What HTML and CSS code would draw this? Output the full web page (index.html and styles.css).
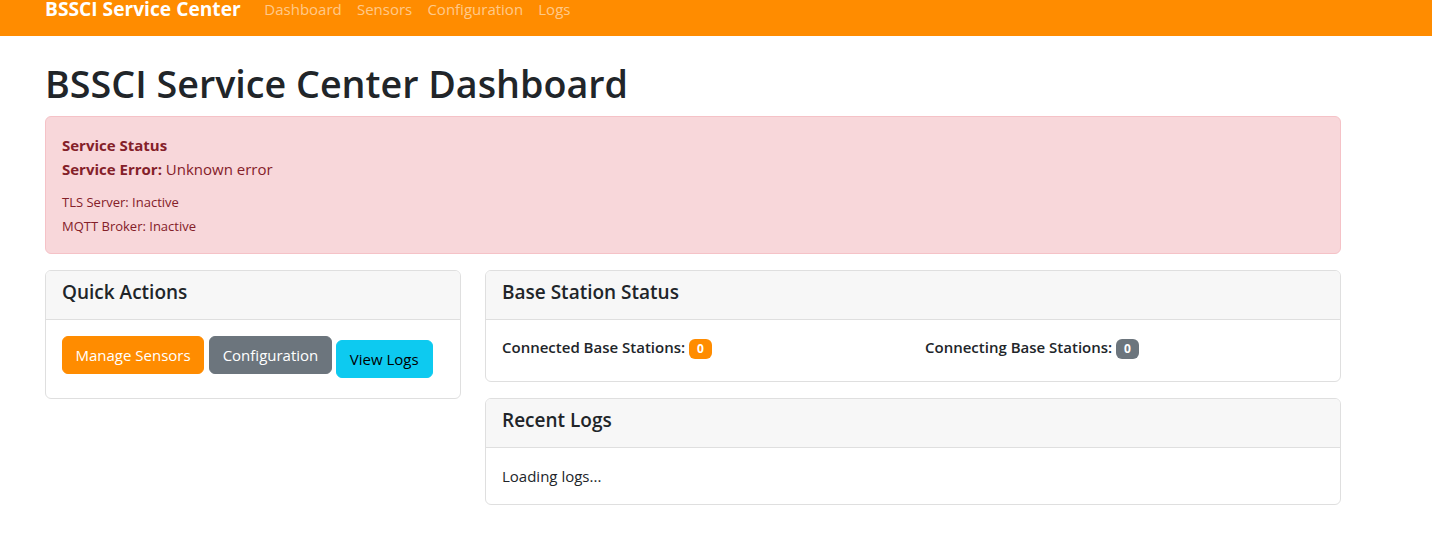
FILE: index.html
```html
<!DOCTYPE html>
<html lang="en">
<head>
<meta charset="utf-8">
<title>BSSCI Service Center Dashboard</title>
<link rel="stylesheet" href="styles.css">
</head>
<body>
<nav class="navbar">
  <div class="container nav-inner">
    <a class="brand" href="#">BSSCI Service Center</a>
    <ul class="nav-links">
      <li><a href="#">Dashboard</a></li>
      <li><a href="#">Sensors</a></li>
      <li><a href="#">Configuration</a></li>
      <li><a href="#">Logs</a></li>
    </ul>
  </div>
</nav>
<main class="container main">
  <h1 class="page-title">BSSCI Service Center Dashboard</h1>
  <div class="alert">
    <div class="alert-title">Service Status</div>
    <div><strong>Service Error:</strong> Unknown error</div>
    <div class="svc-list">
      <div>TLS Server: Inactive</div>
      <div>MQTT Broker: Inactive</div>
    </div>
  </div>
  <div class="row">
    <div class="col-left">
      <div class="card">
        <div class="card-header">Quick Actions</div>
        <div class="card-body">
          <div class="actions">
            <a class="btn btn-orange" href="#">Manage Sensors</a>
            <a class="btn btn-secondary" href="#">Configuration</a>
            <a class="btn btn-info" href="#">View Logs</a>
          </div>
        </div>
      </div>
    </div>
    <div class="col-right">
      <div class="card">
        <div class="card-header">Base Station Status</div>
        <div class="card-body bs-body">
          <div class="bs-row">
            <div class="bs-col"><span class="label">Connected Base Stations:</span> <span class="badge badge-orange">0</span></div>
            <div class="bs-col"><span class="label">Connecting Base Stations:</span> <span class="badge badge-gray">0</span></div>
          </div>
        </div>
      </div>
      <div class="card">
        <div class="card-header">Recent Logs</div>
        <div class="card-body">Loading logs...</div>
      </div>
    </div>
  </div>
</main>
</body>
</html>
```
FILE: styles.css
```css
* { box-sizing: border-box; }
html, body { margin: 0; padding: 0; }
body {
  font-family: "Open Sans", "Noto Sans", sans-serif;
  font-size: 15px;
  line-height: 24px;
  color: #212529;
  background: #fff;
  overflow: hidden;
}
a { text-decoration: none; }

.container {
  width: 1296px;
  margin-left: 45px;
}

.navbar {
  background: #ff8c00;
  margin-top: -17px;
  height: 53px;
  padding: 6px 0 7px;
}
.nav-inner {
  display: flex;
  align-items: center;
  height: 40px;
}
.brand {
  color: #fff;
  font-size: 19.2px;
  font-weight: 700;
  line-height: 30px;
  padding: 5px 0;
  margin-right: 16px;
  white-space: nowrap;
}
.nav-links {
  display: flex;
  list-style: none;
  margin: 0;
  padding: 0;
}
.nav-links a {
  display: block;
  padding: 8px 7.6px;
  color: rgba(255, 255, 255, 0.55);
  line-height: 24px;
  white-space: nowrap;
}

.main { margin-top: 24px; }
.page-title {
  font-size: 37.7px;
  font-weight: 550;
  line-height: 48px;
  margin: 0 0 8px;
  white-space: nowrap;
}

.alert {
  background: #f8d7da;
  border: 1px solid #f5c2c7;
  border-radius: 6px;
  color: #842029;
  padding: 16px 16px 15px;
  margin-bottom: 16px;
}
.alert-title { font-weight: 700; }
.alert strong { font-weight: 700; }
.svc-list {
  margin-top: 9px;
  font-size: 13px;
  line-height: 24px;
}

.row {
  display: flex;
  gap: 24px;
  align-items: flex-start;
}
.col-left { width: 416px; }
.col-right { width: 856px; }

.card {
  border: 1px solid #dfdfdf;
  border-radius: 6px;
  margin-bottom: 16px;
  background: #fff;
  overflow: hidden;
}
.card-header {
  background: #f7f7f7;
  border-bottom: 1px solid #dfdfdf;
  padding: 9px 16px 15px;
  font-size: 19px;
  font-weight: 600;
  line-height: 24px;
}
.card-body { padding: 16px; }

.actions {
  display: flex;
  align-items: flex-start;
  height: 46px;
}
.btn {
  display: inline-block;
  padding: 6px 12.5px;
  border: 1px solid transparent;
  border-radius: 6px;
  line-height: 24px;
  font-size: 15px;
  color: #fff;
  white-space: nowrap;
}
.btn-orange { background: #ff8c00; border-color: #ff8c00; margin-right: 5px; }
.btn-secondary { background: #6c757d; border-color: #6c757d; margin-right: 4px; }
.btn-info { background: #0dcaf0; border-color: #0dcaf0; color: #000; margin-top: 4px; padding: 6px 13px; }

.bs-body { padding: 15px 16px 22px; }
.bs-row {
  display: flex;
  margin: 0 -12px;
}
.bs-col {
  width: 50%;
  padding: 0 12px;
  white-space: nowrap;
}
.label { font-weight: 600; }
.badge {
  display: inline-block;
  font-size: 12px;
  font-weight: 700;
  line-height: 1;
  padding: 4px 8px;
  border-radius: 6px;
  color: #fff;
  vertical-align: baseline;
}
.badge-orange { background: #ff8c00; }
.badge-gray { background: #6c757d; }
```
